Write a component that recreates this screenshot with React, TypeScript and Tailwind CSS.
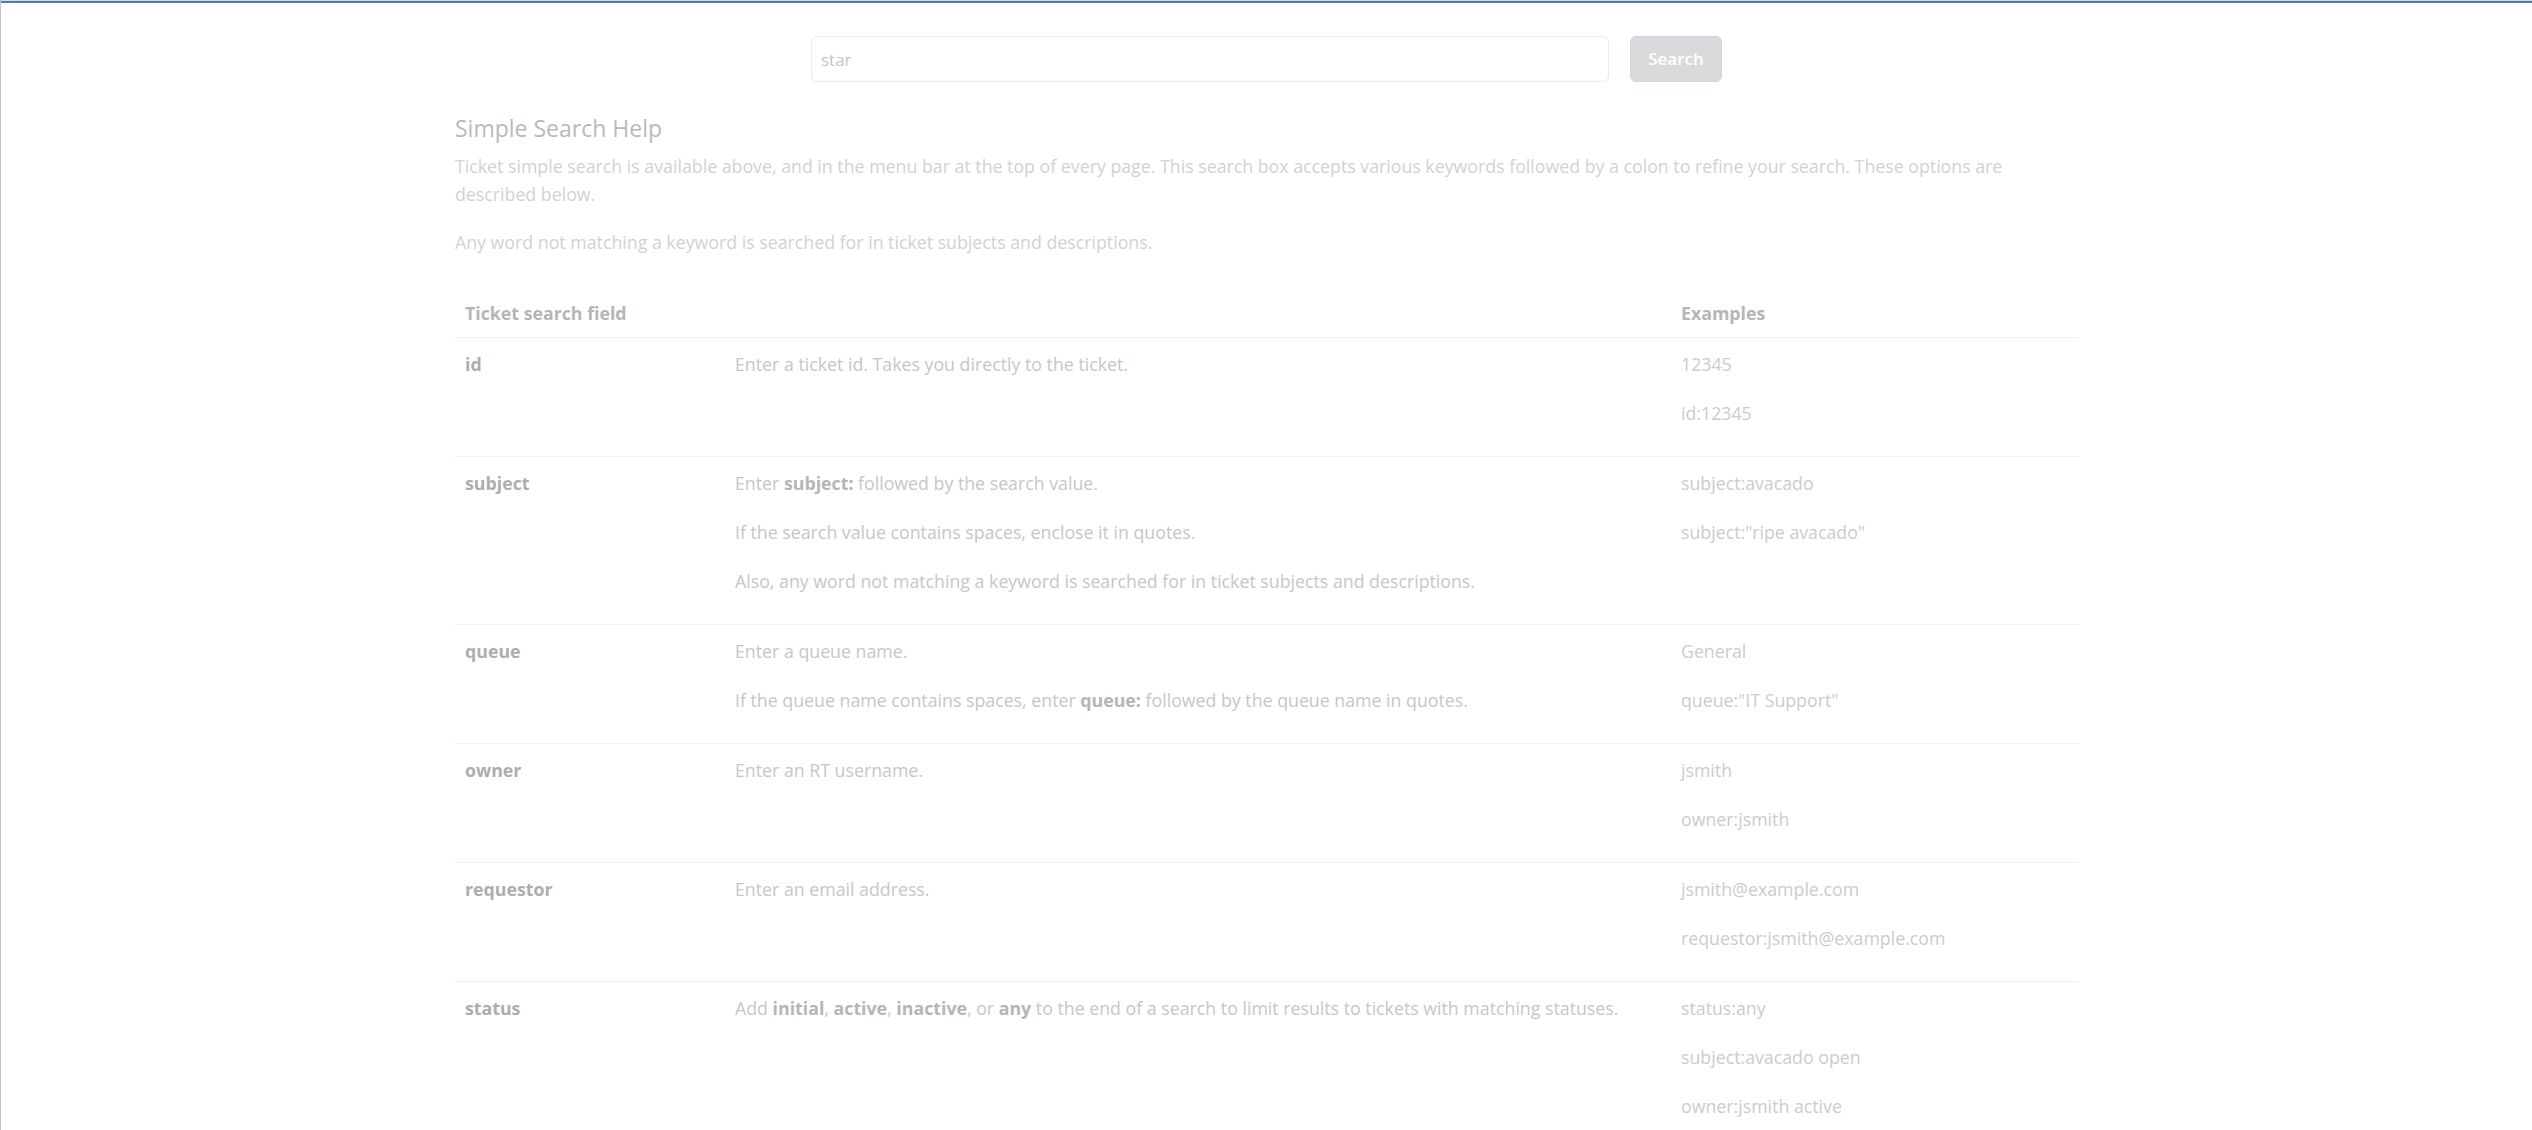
import React from 'react';

type Row = { field: string; desc: React.ReactNode[]; examples: string[] };

const B = ({ children }: { children: React.ReactNode }) => (
  <b className="font-bold text-[#b5b5b8]">{children}</b>
);

const rows: Row[] = [
  {
    field: 'id',
    desc: ['Enter a ticket id. Takes you directly to the ticket.'],
    examples: ['12345', 'id:12345'],
  },
  {
    field: 'subject',
    desc: [
      <>Enter <B>subject:</B> followed by the search value.</>,
      'If the search value contains spaces, enclose it in quotes.',
      'Also, any word not matching a keyword is searched for in ticket subjects and descriptions.',
    ],
    examples: ['subject:avacado', 'subject:"ripe avacado"'],
  },
  {
    field: 'queue',
    desc: [
      'Enter a queue name.',
      <>If the queue name contains spaces, enter <B>queue:</B> followed by the queue name in quotes.</>,
    ],
    examples: ['General', 'queue:"IT Support"'],
  },
  {
    field: 'owner',
    desc: ['Enter an RT username.'],
    examples: ['jsmith', 'owner:jsmith'],
  },
  {
    field: 'requestor',
    desc: ['Enter an email address.'],
    examples: ['jsmith@example.com', 'requestor:jsmith@example.com'],
  },
  {
    field: 'status',
    desc: [
      <>Add <B>initial</B>, <B>active</B>, <B>inactive</B>, or <B>any</B> to the end of a search to limit results to tickets with matching statuses.</>,
    ],
    examples: ['status:any', 'subject:avacado open', 'owner:jsmith active'],
  },
];

export default function App() {
  return (
    <div className="min-h-screen bg-white border-l border-[#c4c4c4] font-['Open_Sans',sans-serif] text-[17.75px]">
      <div className="h-px bg-[#d6dae3]" />
      <div className="h-[2px] bg-[#5077c5]" />

      <div className="mx-auto w-[1623px]">
        {/* search */}
        <form className="flex justify-center gap-[21px] pt-[33px]" onSubmit={e => e.preventDefault()}>
          <input
            defaultValue="star"
            className="w-[798px] h-[46px] rounded-[6px] border border-[#ebebee] px-[9px] text-[17px] text-[#c3c3c8] outline-none"
          />
          <button className="w-[92px] h-[46px] rounded-[6px] bg-[#d9dadc] border border-[#cdd5e7] text-white font-semibold text-[17px]">
            Search
          </button>
        </form>

        <h2 className="mt-[30px] text-[23px] leading-[32px] text-[#b9b9bc]">Simple Search Help</h2>
        <p className="mt-[8px] leading-[28px] text-[#d1d1d6]">
          Ticket simple search is available above, and in the menu bar at the top of every page. This search box accepts various keywords followed by a colon to refine your search. These options are described below.
        </p>
        <p className="mt-[20px] leading-[28px] text-[#d1d1d6]">
          Any word not matching a keyword is searched for in ticket subjects and descriptions.
        </p>

        <table className="mt-[31px] w-full border-collapse text-left">
          <thead>
            <tr className="border-b border-[#f0f0f2]">
              <th className="w-[270px] pl-[10px] pt-[12px] pb-[10px] leading-[28px] font-bold text-[#b5b5b8]">Ticket search field</th>
              <th className="w-[946px]" />
              <th className="pl-[10px] pt-[12px] pb-[10px] leading-[28px] font-bold text-[#b5b5b8]">Examples</th>
            </tr>
          </thead>
          <tbody>
            {rows.map(r => (
              <tr key={r.field} className="border-b border-[#f0f0f2] align-top">
                <td className="pl-[10px] pt-[12px] pb-[8px] leading-[28px] font-bold text-[#adadb0]">{r.field}</td>
                <td className="pl-[10px] pt-[12px] pb-[8px] text-[#c6c6cb]">
                  {r.desc.map((d, i) => (
                    <p key={i} className="leading-[28px] mb-[21px]">{d}</p>
                  ))}
                </td>
                <td className="pl-[10px] pt-[12px] pb-[8px] text-[#cbcbd0]">
                  {r.examples.map(x => (
                    <p key={x} className="leading-[28px] mb-[21px]">{x}</p>
                  ))}
                </td>
              </tr>
            ))}
          </tbody>
        </table>
      </div>
    </div>
  );
}
